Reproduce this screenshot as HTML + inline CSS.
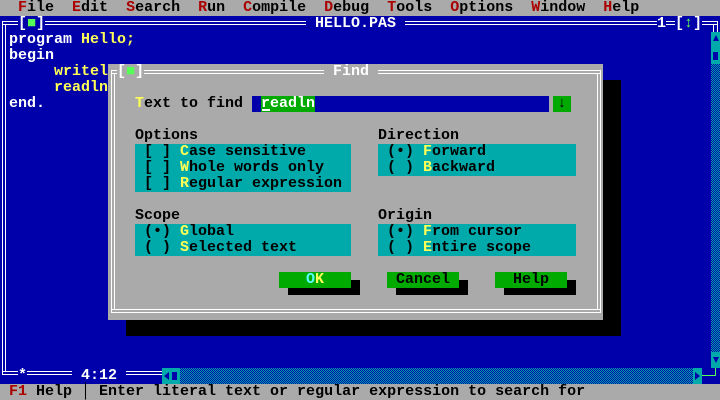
<!DOCTYPE html>
<html><head><meta charset="utf-8"><style>
*{margin:0;padding:0;box-sizing:border-box}
body{width:720px;height:400px;overflow:hidden;background:#0000aa;position:relative;font:bold 15px/16px "Liberation Mono",monospace}
.t{position:absolute;white-space:pre;height:16px;line-height:16px}
.a{position:absolute}
.w{color:#fff}.y{color:#ffff55}.r{color:#aa0000}.k{color:#000}.g{color:#55ff55}.c{color:#55ffff}
.hl{position:absolute;height:4px;border-top:1px solid #fff;border-bottom:1px solid #fff}
.vl{position:absolute;width:4px;border-left:1px solid #fff;border-right:1px solid #fff}
.chk{background:repeating-conic-gradient(#00aaaa 0 25%,#0000aa 0 50%) 0 0/2px 2px}
</style></head><body>
<!-- menu -->
<div class="a" style="left:0;top:0;width:720px;height:16px;background:#aaaaaa"></div>
<div class="t k" style="left:18px;top:0"><span class="r">F</span>ile  <span class="r">E</span>dit  <span class="r">S</span>earch  <span class="r">R</span>un  <span class="r">C</span>ompile  <span class="r">D</span>ebug  <span class="r">T</span>ools  <span class="r">O</span>ptions  <span class="r">W</span>indow  <span class="r">H</span>elp</div>

<!-- editor frame -->
<div class="hl" style="left:2px;top:21px;width:16px"></div>
<div class="t w" style="left:18px;top:16px">[<span class="g">■</span>]</div>
<div class="hl" style="left:45px;top:21px;width:261px"></div>
<div class="t w" style="left:306px;top:16px"> HELLO.PAS </div>
<div class="hl" style="left:405px;top:21px;width:252px"></div>
<div class="t w" style="left:657px;top:16px">1</div>
<div class="hl" style="left:666px;top:21px;width:9px"></div>
<div class="t w" style="left:675px;top:16px">[<span class="g">↕</span>]</div>
<div class="hl" style="left:702px;top:21px;width:16px;border-right:1px solid #fff"></div>
<div class="a" style="left:713px;top:24px;width:1px;height:8px;background:#fff"></div>
<div class="a" style="left:717px;top:21px;width:1px;height:11px;background:#fff"></div>
<div class="a" style="left:2px;top:21px;width:1px;height:354px;background:#fff"></div>
<div class="a" style="left:5px;top:24px;width:1px;height:348px;background:#fff"></div>
<div class="hl" style="left:2px;top:371px;width:70px"></div>
<div class="t w" style="left:18px;top:368px;background:#0000aa">*</div>
<div class="t w" style="left:72px;top:368px"> 4:12 </div>
<div class="hl" style="left:126px;top:371px;width:36px"></div>

<!-- code -->
<div class="t w" style="left:9px;top:32px">program <span class="y">Hello;</span></div>
<div class="t w" style="left:9px;top:48px">begin</div>
<div class="t y" style="left:54px;top:64px">writeln('Hello');</div>
<div class="t y" style="left:54px;top:80px">readln;</div>
<div class="t w" style="left:9px;top:96px">end.</div>

<!-- vertical scrollbar -->
<div class="a chk" style="left:711px;top:32px;width:9px;height:336px"></div>
<div class="a" style="left:711px;top:32px;width:9px;height:32px;background:#00aaaa"></div>
<div class="a" style="left:713px;top:35px;width:0;height:0;border-left:3px solid transparent;border-right:3px solid transparent;border-bottom:6px solid #0000aa"></div>
<div class="a" style="left:713px;top:52px;width:5px;height:8px;background:#0000aa"></div>
<div class="a" style="left:711px;top:352px;width:9px;height:16px;background:#00aaaa"></div>
<div class="a" style="left:713px;top:357px;width:0;height:0;border-left:3px solid transparent;border-right:3px solid transparent;border-top:6px solid #0000aa"></div>
<!-- horizontal scrollbar -->
<div class="a chk" style="left:162px;top:368px;width:540px;height:16px"></div>
<div class="a" style="left:162px;top:368px;width:18px;height:16px;background:#00aaaa"></div>
<div class="a" style="left:164px;top:372px;width:0;height:0;border-top:4px solid transparent;border-bottom:4px solid transparent;border-right:5px solid #0000aa"></div>
<div class="a" style="left:172px;top:372px;width:5px;height:8px;background:#0000aa"></div>
<div class="a" style="left:693px;top:368px;width:9px;height:16px;background:#00aaaa"></div>
<div class="a" style="left:695px;top:372px;width:0;height:0;border-top:4px solid transparent;border-bottom:4px solid transparent;border-left:5px solid #0000aa"></div>
<div class="a" style="left:702px;top:375px;width:14px;height:1px;background:#55ff55"></div>
<div class="a" style="left:715px;top:368px;width:1px;height:8px;background:#55ff55"></div>

<!-- dialog shadow + body -->
<div class="a" style="left:126px;top:80px;width:495px;height:256px;background:#000"></div>
<div class="a" style="left:108px;top:64px;width:495px;height:256px;background:#aaaaaa"></div>
<div class="a" style="left:111px;top:70px;width:1px;height:243px;background:#fff"></div>
<div class="a" style="left:114px;top:73px;width:1px;height:237px;background:#fff"></div>
<div class="a" style="left:600px;top:70px;width:1px;height:243px;background:#fff"></div>
<div class="a" style="left:597px;top:73px;width:1px;height:237px;background:#fff"></div>
<div class="hl" style="left:111px;top:309px;width:490px"></div>
<div class="hl" style="left:111px;top:70px;width:6px"></div>
<div class="t w" style="left:117px;top:64px">[<span class="g">■</span>]</div>
<div class="hl" style="left:144px;top:70px;width:180px"></div>
<div class="t w" style="left:324px;top:64px"> Find </div>
<div class="hl" style="left:378px;top:70px;width:223px"></div>

<div class="t k" style="left:135px;top:96px"><span class="y">T</span>ext to find</div>
<div class="a" style="left:252px;top:96px;width:297px;height:16px;background:#0000aa"></div>
<div class="t w" style="left:261px;top:96px;background:#00aa00">readln</div>
<div class="a" style="left:262px;top:109px;width:8px;height:2px;background:#fff"></div>
<div class="t k" style="left:553px;top:96px;width:18px;background:#00aa00;text-align:center">↓</div>

<div class="t k" style="left:135px;top:128px">Options</div>
<div class="a" style="left:135px;top:144px;width:216px;height:48px;background:#00aaaa"></div>
<div class="t k" style="left:144px;top:144px">[ ] <span class="y">C</span>ase sensitive</div>
<div class="t k" style="left:144px;top:160px">[ ] <span class="y">W</span>hole words only</div>
<div class="t k" style="left:144px;top:176px">[ ] <span class="y">R</span>egular expression</div>

<div class="t k" style="left:378px;top:128px">Direction</div>
<div class="a" style="left:378px;top:144px;width:198px;height:32px;background:#00aaaa"></div>
<div class="t k" style="left:387px;top:144px">(•) <span class="y">F</span>orward</div>
<div class="t k" style="left:387px;top:160px">( ) <span class="y">B</span>ackward</div>

<div class="t k" style="left:135px;top:208px">Scope</div>
<div class="a" style="left:135px;top:224px;width:216px;height:32px;background:#00aaaa"></div>
<div class="t k" style="left:144px;top:224px">(•) <span class="y">G</span>lobal</div>
<div class="t k" style="left:144px;top:240px">( ) <span class="y">S</span>elected text</div>

<div class="t k" style="left:378px;top:208px">Origin</div>
<div class="a" style="left:378px;top:224px;width:198px;height:32px;background:#00aaaa"></div>
<div class="t k" style="left:387px;top:224px">(•) <span class="y">F</span>rom cursor</div>
<div class="t k" style="left:387px;top:240px">( ) <span class="y">E</span>ntire scope</div>

<div class="a" style="left:288px;top:280px;width:72px;height:15px;background:#000"></div>
<div class="t c" style="left:279px;top:272px;width:72px;background:#00aa00;text-align:center">O<span class="y">K</span></div>
<div class="a" style="left:396px;top:280px;width:72px;height:15px;background:#000"></div>
<div class="t k" style="left:387px;top:272px;width:72px;background:#00aa00;text-align:center">Cancel</div>
<div class="a" style="left:504px;top:280px;width:72px;height:15px;background:#000"></div>
<div class="t k" style="left:495px;top:272px;width:72px;background:#00aa00;text-align:center">Help</div>

<!-- status -->
<div class="a" style="left:0;top:384px;width:720px;height:16px;background:#aaaaaa"></div>
<div class="t k" style="left:9px;top:384px"><span class="r">F1</span> Help │ Enter literal text or regular expression to search for</div>
</body></html>
